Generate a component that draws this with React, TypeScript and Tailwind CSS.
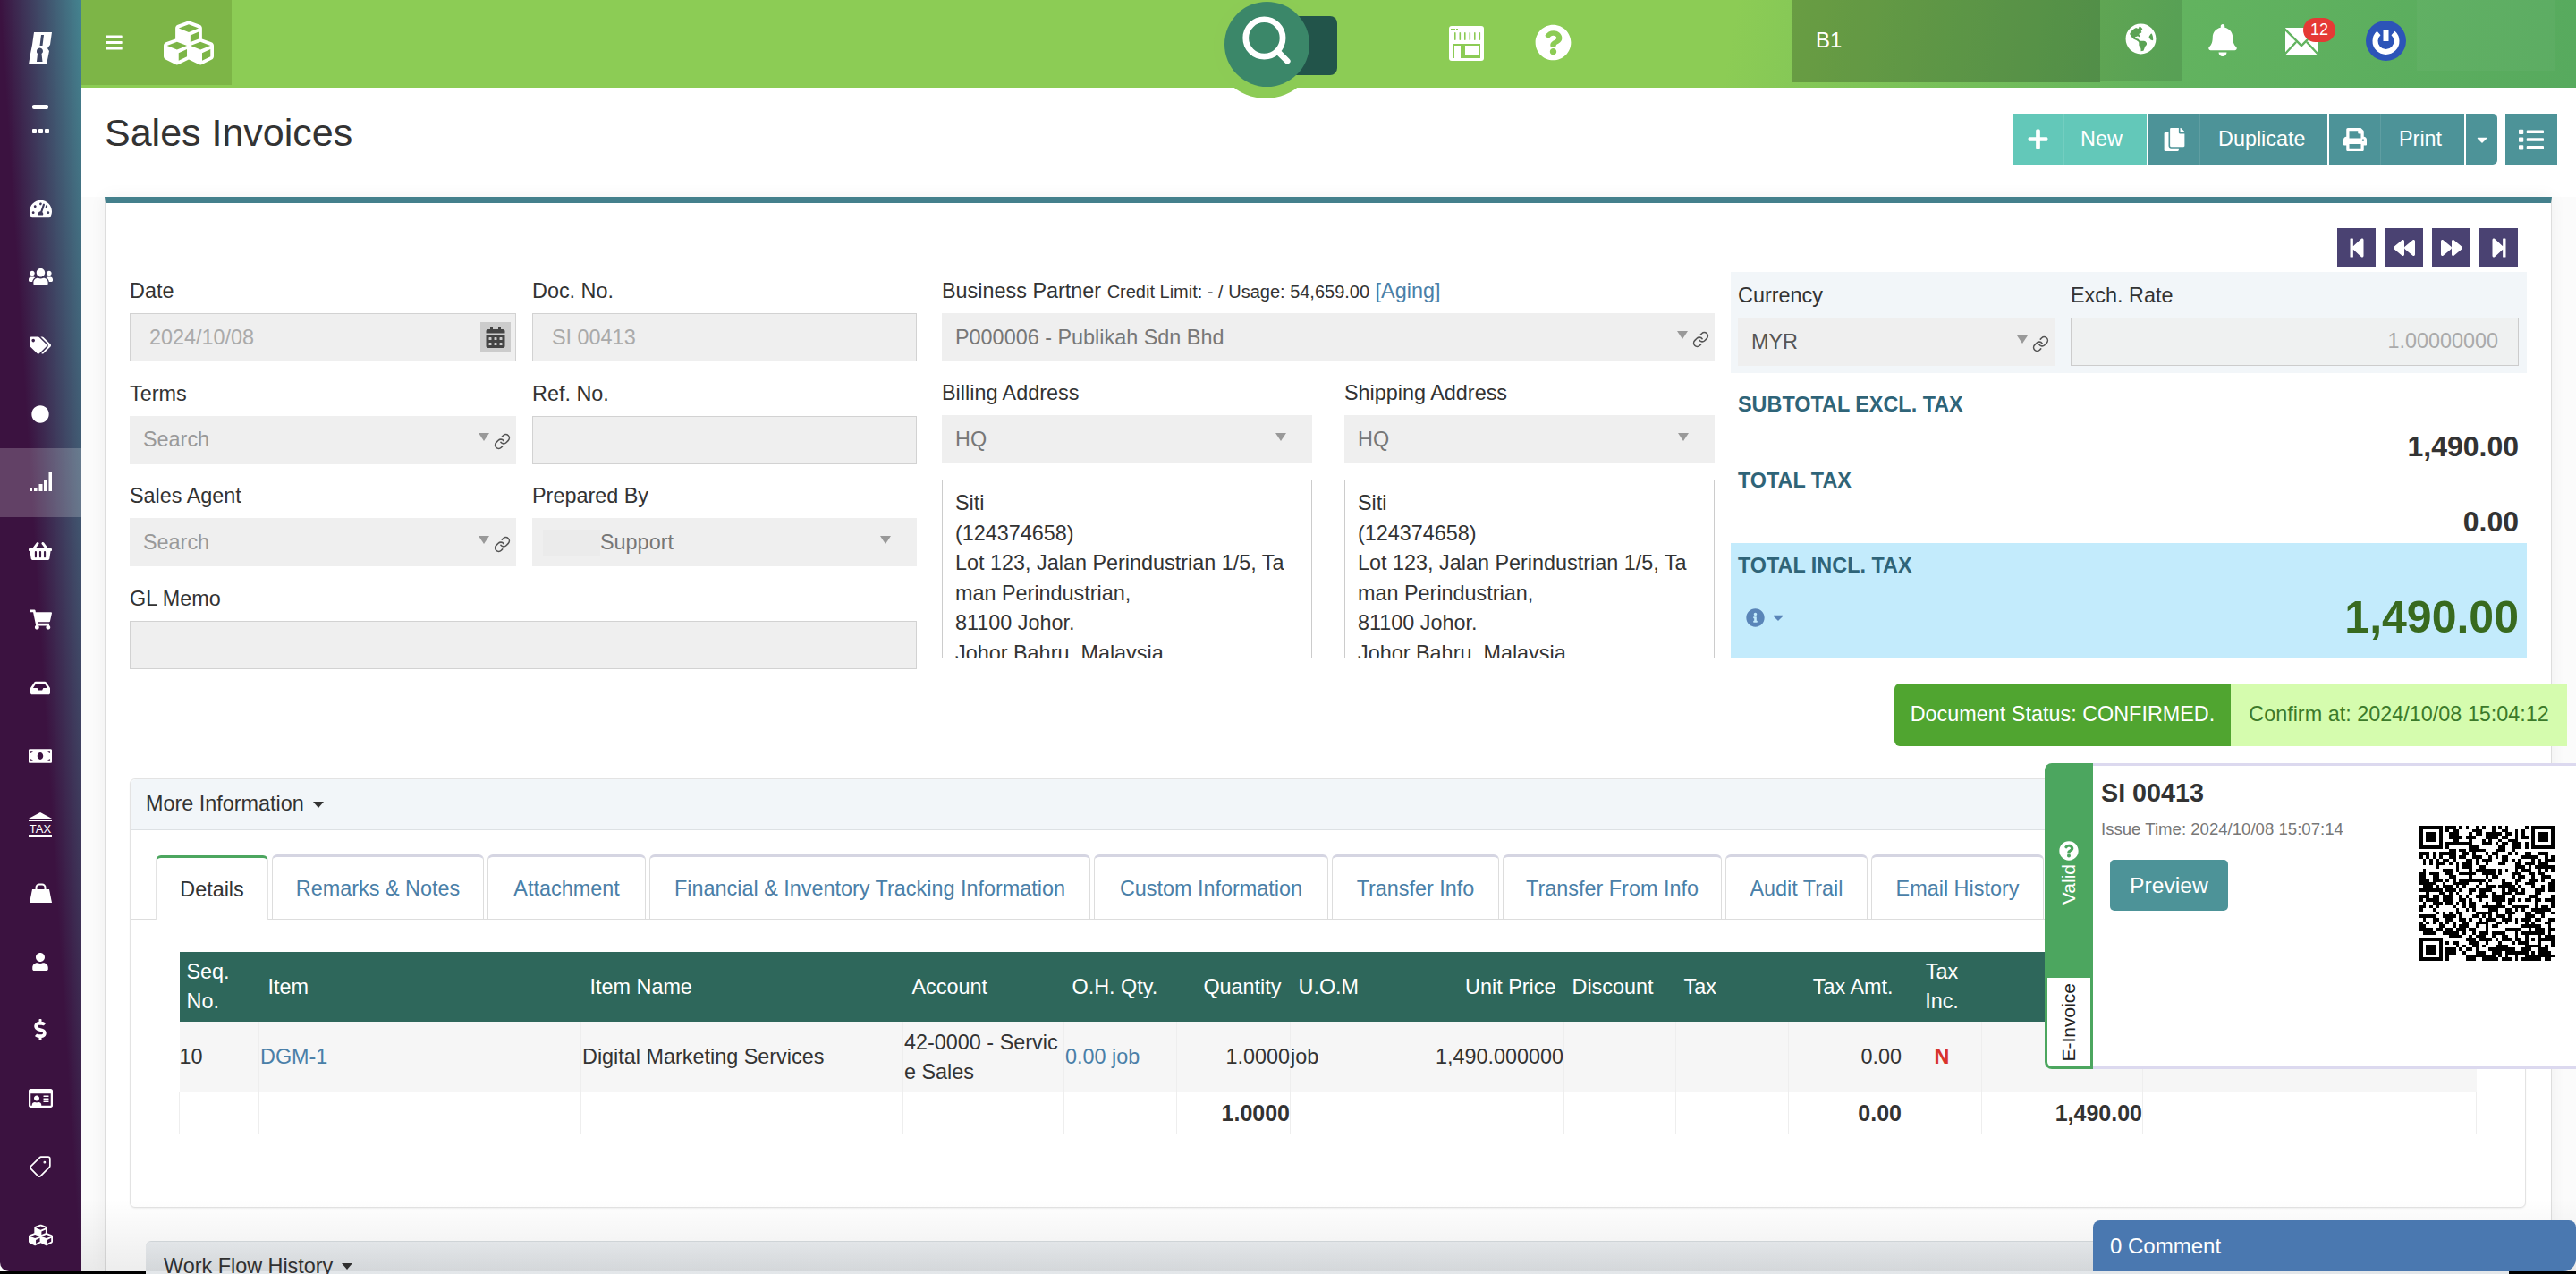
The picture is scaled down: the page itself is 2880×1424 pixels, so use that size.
import type { ReactNode } from "react";
import { Search, Link as LinkIcon, Tag } from "lucide-react";
import {
  FaBars, FaBell, FaCalendarAlt, FaCaretDown, FaCopy, FaCubes, FaDollarSign, FaGlobeAmericas, FaInbox,
  FaInfoCircle, FaList, FaMoneyBill, FaPlus, FaPrint, FaQuestionCircle, FaRegIdCard, FaShoppingBasket,
  FaShoppingCart, FaStepBackward, FaStepForward, FaBackward, FaForward, FaTachometerAlt, FaTags, FaUser,
  FaUsers, FaCircle,
} from "react-icons/fa";

function SignalIcon() {
  return (
    <svg width="25" height="22" viewBox="0 0 25 22" fill="#fff">
      <rect x="0" y="18" width="3" height="3" />
      <rect x="5" y="17" width="3.5" height="4" />
      <rect x="10.5" y="13" width="4" height="8" />
      <rect x="16" y="8" width="4" height="13" />
      <rect x="21.5" y="0" width="3.5" height="21" />
    </svg>
  );
}

function TaxIcon() {
  return (
    <svg width="26" height="28" viewBox="0 0 26 28" fill="#fff">
      <path d="M13 0 26 7H0Z" />
      <rect x="0" y="8" width="26" height="2" />
      <text x="13" y="23" textAnchor="middle" fontSize="13" fontFamily="Liberation Sans, sans-serif">TAX</text>
      <rect x="0" y="25" width="26" height="2" />
    </svg>
  );
}

function BagIcon() {
  return (
    <svg width="25" height="22" viewBox="0 0 25 22" fill="#fff">
      <path d="M7.5 8V5a3.5 3.5 0 0 1 3.5-3.5h3A3.5 3.5 0 0 1 17.5 5v3" fill="none" stroke="#fff" strokeWidth="2" />
      <path d="M3 7h19l3 15H0Z" />
    </svg>
  );
}

function BrandLogo() {
  return (
    <svg width="26" height="36" viewBox="0 0 26 36" fill="#fff">
      <path
        fillRule="evenodd"
        d="M6 0H26L24 14 21 18 23 21 20 36H0L2 24 4 14ZM14 3H17L15.5 15H12.5ZM9 21a3.5 3.5 0 1 1 5.5 3L15.5 33H9L10 24a3.5 3.5 0 0 1-1-3Z"
      />
    </svg>
  );
}

function StoreIcon() {
  return (
    <svg width="39" height="39" viewBox="0 0 39 39">
      <rect width="39" height="39" rx="3" fill="#fff" />
      <g fill="#8ccb55">
        <rect x="2" y="3" width="2" height="1.5" />
        <rect x="5" y="3" width="2" height="1.5" />
        <rect x="8" y="3" width="2" height="1.5" />
        <rect x="6" y="7" width="1.6" height="9" rx="0.8" />
        <rect x="11.5" y="7" width="1.6" height="9" rx="0.8" />
        <rect x="17" y="7" width="1.6" height="9" rx="0.8" />
        <rect x="22.5" y="7" width="1.6" height="9" rx="0.8" />
        <rect x="28" y="7" width="1.6" height="9" rx="0.8" />
        <rect x="33.5" y="7" width="1.6" height="9" rx="0.8" />
        <rect x="4" y="20" width="31" height="16" />
      </g>
      <rect x="6" y="22" width="7" height="14" fill="#fff" />
      <rect x="18" y="22" width="15" height="11" fill="#fff" />
    </svg>
  );
}

function MailIcon() {
  return (
    <svg width="36" height="30" viewBox="0 0 36 30">
      <rect width="36" height="30" fill="#fff" />
      <path d="M-1 1 18 20 37 1M-1 30 12 16M37 30 24 16" fill="none" stroke="#62b35f" strokeWidth="2.4" />
    </svg>
  );
}

function PowerIcon() {
  return (
    <svg width="45" height="45" viewBox="0 0 45 45">
      <circle cx="22.5" cy="22.5" r="22.5" fill="#2c54b8" />
      <path d="M14.5 14a12 12 0 1 0 16 0" fill="none" stroke="#fff" strokeWidth="6" />
      <path d="M22.5 10v13" stroke="#fff" strokeWidth="6" />
    </svg>
  );
}

// not a real code, only the look of one
function QrCode() {
  const size = 41;
  let seed = 413;
  let d = "";
  const inFinder = (x: number, y: number) =>
    (x < 8 && y < 8) || (x > size - 9 && y < 8) || (x < 8 && y > size - 9);
  const ring = (ox: number, oy: number, n: number, x: number, y: number) => {
    const dx = x - ox;
    const dy = y - oy;
    if (dx < 0 || dy < 0 || dx >= n || dy >= n) return false;
    return dx === 0 || dy === 0 || dx === n - 1 || dy === n - 1 || (dx > 1 && dy > 1 && dx < n - 2 && dy < n - 2);
  };
  for (let y = 0; y < size; y++) {
    for (let x = 0; x < size; x++) {
      seed = (seed * 1103515245 + 12345) & 0x7fffffff;
      let on = (seed >> 16) % 100 < 52;
      if (inFinder(x, y)) {
        on = ring(0, 0, 7, x, y) || ring(size - 7, 0, 7, x, y) || ring(0, size - 7, 7, x, y);
      } else if (x >= 32 && x <= 36 && y >= 32 && y <= 36) {
        on = x === 32 || x === 36 || y === 32 || y === 36 || (x === 34 && y === 34);
      }
      if (on) d += `M${x} ${y}h1v1h-1z`;
    }
  }
  return (
    <svg width="151" height="151" viewBox="0 0 41 41" shapeRendering="crispEdges">
      <path d={d} fill="#000" />
    </svg>
  );
}

const sideItems: { icon: ReactNode; active?: boolean }[] = [
  { icon: <FaTachometerAlt size={25} /> },
  { icon: <FaUsers size={27} /> },
  { icon: <FaTags size={24} /> },
  { icon: <FaCircle size={20} /> },
  { icon: <SignalIcon />, active: true },
  { icon: <FaShoppingBasket size={26} /> },
  { icon: <FaShoppingCart size={25} /> },
  { icon: <FaInbox size={22} /> },
  { icon: <FaMoneyBill size={26} /> },
  { icon: <TaxIcon /> },
  { icon: <BagIcon /> },
  { icon: <FaUser size={20} /> },
  { icon: <FaDollarSign size={24} /> },
  { icon: <FaRegIdCard size={27} /> },
  { icon: <Tag size={26} strokeWidth={1.6} className="rotate-90" /> },
  { icon: <FaCubes size={27} /> },
];

function Sidebar() {
  return (
    <aside className="w-[90px] shrink-0 h-full rounded-bl-[10px] text-white flex flex-col items-stretch bg-[linear-gradient(to_bottom_left,#44838f_0%,#3b1240_50%)]">
      <div className="pt-[36px] flex justify-center">
        <BrandLogo />
      </div>
      <div className="mt-[45px] mx-auto w-[18px] h-[5px] rounded-[2px] bg-white" />
      <div className="mt-[22px] flex justify-center gap-[2px]">
        <span className="w-[5px] h-[5px] rounded-[1px] bg-white" />
        <span className="w-[5px] h-[5px] rounded-[1px] bg-white" />
        <span className="w-[5px] h-[5px] rounded-[1px] bg-white" />
      </div>
      <div className="mt-[46px]">
        {sideItems.map((item, idx) => (
          <div
            key={idx}
            className={`h-[76.5px] flex items-center justify-center ${item.active ? "bg-white/20" : ""}`}
          >
            {item.icon}
          </div>
        ))}
      </div>
    </aside>
  );
}

function TopBar() {
  return (
    <header className="relative z-10 h-[98px] shrink-0 flex items-start text-white bg-[linear-gradient(100deg,#8ccc55_0%,#8ccc55_66%,#62b35f_84%,#57aa5e_100%)]">
      <div className="w-[169px] h-[95px] bg-[#7db547] flex items-center pl-[27px] gap-[45px]">
        <FaBars size={21} />
        <FaCubes size={56} />
      </div>
      <div className="relative ml-[1110px] w-[126px] h-[98px]">
        <div className="absolute left-[-12px] top-[-6px] w-[116px] h-[116px] rounded-full bg-[#8ccb55]" />
        <div className="absolute left-[60px] top-[18px] w-[66px] h-[66px] rounded-[8px] bg-[#22544a]" />
        <div className="absolute left-0 top-[2px] w-[95px] h-[95px] rounded-full bg-[#3b8769] flex items-center justify-center">
          <Search size={62} strokeWidth={2.6} className="mb-[10px] mr-[2px]" />
        </div>
      </div>
      <div className="ml-[125px] mt-[29px]">
        <StoreIcon />
      </div>
      <div className="ml-[57px] mt-[27px]">
        <FaQuestionCircle size={41} />
      </div>
      <div className="ml-[246px] w-[345px] h-[92px] bg-[rgba(0,0,0,0.22)] flex items-center pl-[27px] text-[24px] pb-[2px]">B1</div>
      <div className="w-[91px] h-[90px] bg-[rgba(0,0,0,0.1)] flex items-center justify-center pb-[4px]">
        <FaGlobeAmericas size={35} />
      </div>
      <div className="ml-[28px] mt-[27px]">
        <FaBell size={36} />
      </div>
      <div className="relative ml-[52px] mt-[31px]">
        <MailIcon />
        <span className="absolute left-[20px] top-[-11px] w-[36px] h-[27px] rounded-[14px] bg-[#e53935] text-[18px] leading-[27px] text-center">12</span>
      </div>
      <div className="ml-[54px] mt-[23px]">
        <PowerIcon />
      </div>
      <div className="ml-[12px] w-[154px] h-[79px] bg-white/[0.03]" />
    </header>
  );
}

function ActionButton({ icon, label, color, labelPad }: { icon: ReactNode; label: string; color: string; labelPad: string }) {
  return (
    <button className={`${color} h-[57px] flex items-center text-white text-[23.4px]`}>
      <span className="w-[58px] h-full flex items-center justify-center border-r border-white/10">{icon}</span>
      <span className={labelPad}>{label}</span>
    </button>
  );
}

function Field({ label, children, className }: { label: ReactNode; children: ReactNode; className?: string }) {
  return (
    <div className={className}>
      <div className="h-[30px] leading-[30px] mb-[10px] whitespace-nowrap">{label}</div>
      {children}
    </div>
  );
}

function TextBox({ value, right, muted = true }: { value?: string; right?: ReactNode; muted?: boolean }) {
  return (
    <div className={`h-[54px] bg-[#efefef] border border-[#d2d2d2] flex items-center justify-between pl-[21px] ${muted ? "text-[#aaa]" : "text-[#777]"}`}>
      <span className="pt-px">{value}</span>
      {right}
    </div>
  );
}

function SelectBox({ value, link = true, muted = false, dim = false }: { value: ReactNode; link?: boolean; muted?: boolean; dim?: boolean }) {
  return (
    <div className={`h-[54px] bg-[#efefef] flex items-center pl-[15px] ${muted ? "text-[#999]" : dim ? "text-[#555]" : "text-[#777]"}`}>
      <span className="flex-1 pt-px whitespace-nowrap flex items-center">{value}</span>
      <span className={`w-0 h-0 border-x-[6px] border-x-transparent border-t-[9px] border-t-[#999] mb-[6px] ${link ? "mr-[5px]" : "mr-[29px]"}`} />
      {link && <LinkIcon size={19} strokeWidth={2} className="text-[#555] mr-[6px] mt-[4px]" />}
    </div>
  );
}

function AddressBox() {
  const lines = ["Siti", "(124374658)", "Lot 123, Jalan Perindustrian 1/5, Ta", "man Perindustrian,", "81100 Johor.", "Johor Bahru, Malaysia"];
  return (
    <div className="mt-[18px] h-[200px] border border-[#ccc] overflow-hidden pt-[9px] pl-[14px] leading-[33.5px] text-[#333]">
      {lines.map((line) => (
        <div key={line} className="whitespace-nowrap">{line}</div>
      ))}
    </div>
  );
}

function NavButton({ children }: { children: ReactNode }) {
  return <button className="w-[43px] h-[43px] bg-[#4a4272] text-white flex items-center justify-center">{children}</button>;
}

function FormSection() {
  return (
    <div className="flex pl-[27px]">
      <div className="w-[880px] pt-[83px] grid grid-cols-[432px_430px] gap-x-[18px] gap-y-[20.5px] content-start">
        <Field label="Date">
          <TextBox
            value="2024/10/08"
            right={
              <span className="w-[34px] h-[34px] bg-[#ccc] mr-[5px] flex items-center justify-center text-[#444]">
                <FaCalendarAlt size={24} />
              </span>
            }
          />
        </Field>
        <Field label="Doc. No."><TextBox value="SI 00413" /></Field>
        <Field label="Terms"><SelectBox value="Search" muted /></Field>
        <Field label="Ref. No."><TextBox /></Field>
        <Field label="Sales Agent"><SelectBox value="Search" muted /></Field>
        <Field label="Prepared By">
          <SelectBox
            link={false}
            value={
              <>
                <span className="w-[64px] h-[29px] ml-[-3px] bg-[#ebebeb]" />
                Support
              </>
            }
          />
        </Field>
        <Field label="GL Memo" className="col-span-2"><TextBox /></Field>
      </div>

      <div className="w-[864px] ml-[28px] pt-[83px]">
        <Field
          label={
            <>
              Business Partner <span className="text-[20px]">Credit Limit: - / Usage: 54,659.00</span>{" "}
              <a className="text-[#4a7fa8]">[Aging]</a>
            </>
          }
        >
          <SelectBox value="P000006 - Publikah Sdn Bhd" />
        </Field>
        <div className="grid grid-cols-2 gap-x-[36px] mt-[20px]">
          <Field label="Billing Address">
            <SelectBox value="HQ" link={false} />
            <AddressBox />
          </Field>
          <Field label="Shipping Address">
            <SelectBox value="HQ" link={false} />
            <AddressBox />
          </Field>
        </div>
      </div>

      <div className="w-[890px] ml-[18px] pt-[28px]">
        <div className="flex justify-end gap-[10px] pr-[10px]">
          <NavButton><FaStepBackward size={24} /></NavButton>
          <NavButton><FaBackward size={24} /></NavButton>
          <NavButton><FaForward size={24} /></NavButton>
          <NavButton><FaStepForward size={24} /></NavButton>
        </div>
        <div className="mt-[6px] h-[113px] bg-[#f2f6f9] pl-[8px] pr-[9px] pt-[11px] flex gap-[18px]">
          <Field label="Currency" className="w-[354px]"><SelectBox value="MYR" dim /></Field>
          <Field label="Exch. Rate" className="flex-1">
            <div className="h-[54px] bg-[#eff1f1] border border-[#ccc] flex items-center justify-end pr-[22px] text-[#aaa]">1.00000000</div>
          </Field>
        </div>
        <div className="px-[8px] pr-[9px]">
          <div className="mt-[20px] h-[30px] leading-[30px] font-bold text-[#2f6478]">SUBTOTAL EXCL. TAX</div>
          <div className="mt-[17px] h-[30px] leading-[30px] font-bold text-[32px] text-right">1,490.00</div>
          <div className="mt-[8px] h-[30px] leading-[30px] font-bold text-[#2f6478]">TOTAL TAX</div>
          <div className="mt-[16px] h-[30px] leading-[30px] font-bold text-[32px] text-right">0.00</div>
        </div>
        <div className="mt-[9px] h-[128px] bg-[#c3ebfc] px-[8px] pr-[9px] pt-[10px]">
          <div className="h-[30px] leading-[30px] font-bold text-[#2f6478]">TOTAL INCL. TAX</div>
          <div className="mt-[13px] h-[60px] flex items-center justify-between">
            <span className="flex items-center gap-[6px] pl-[9px] text-[#5a85b8]">
              <FaInfoCircle size={21} />
              <FaCaretDown size={18} />
            </span>
            <span className="font-bold text-[50px] text-[#386a1f]">1,490.00</span>
          </div>
        </div>
        <div className="mt-[29px] -mr-[45px] flex justify-end">
          <div className="w-[376px] h-[70px] bg-[#50a530] text-white rounded-l-[6px] flex items-center justify-center whitespace-nowrap">Document Status: CONFIRMED.</div>
          <div className="w-[376px] h-[70px] bg-[#d5fcae] text-[#3c7a2a] flex items-center justify-center whitespace-nowrap">Confirm at: 2024/10/08 15:04:12</div>
        </div>
      </div>
    </div>
  );
}

const tabs = [
  { label: "Details", width: "w-[126px]", active: true },
  { label: "Remarks & Notes", width: "w-[237px]" },
  { label: "Attachment", width: "w-[177px]" },
  { label: "Financial & Inventory Tracking Information", width: "w-[493px]" },
  { label: "Custom Information", width: "w-[262px]" },
  { label: "Transfer Info", width: "w-[187px]" },
  { label: "Transfer From Info", width: "w-[245px]" },
  { label: "Audit Trail", width: "w-[159px]" },
  { label: "Email History", width: "w-[193px]" },
];

const colWidths = ["w-[89px]", "w-[360px]", "w-[360px]", "w-[180px]", "w-[126px]", "w-[127px]", "w-[125px]", "w-[181px]", "w-[125px]", "w-[126px]", "w-[127px]", "w-[89px]", "w-[180px]", "w-[373px]"];

function DetailsTable() {
  const line = "border-r border-[#eeeeee]";
  return (
    <table className="ml-[54px] w-[2568px] table-fixed text-left leading-[33px]">
      <colgroup>
        {colWidths.map((w, idx) => (
          <col key={idx} className={w} />
        ))}
      </colgroup>
      <thead>
        <tr className="h-[78px] bg-[#2e675b] text-white">
          <th className="font-normal pl-[8px]">Seq.<br />No.</th>
          <th className="font-normal pl-[10px]">Item</th>
          <th className="font-normal pl-[10px]">Item Name</th>
          <th className="font-normal pl-[10px]">Account</th>
          <th className="font-normal pl-[9px] whitespace-nowrap">O.H. Qty.</th>
          <th className="font-normal text-right pr-[10px]">Quantity</th>
          <th className="font-normal pl-[9px]">U.O.M</th>
          <th className="font-normal text-right pr-[9px]">Unit Price</th>
          <th className="font-normal pl-[9px]">Discount</th>
          <th className="font-normal pl-[9px]">Tax</th>
          <th className="font-normal text-right pr-[10px]">Tax Amt.</th>
          <th className="font-normal text-center">Tax<br />Inc.</th>
          <th />
          <th />
        </tr>
      </thead>
      <tbody>
        <tr className="h-[79px] bg-[#f6f6f6]">
          <td className={line}>10</td>
          <td className={`${line} pl-px text-[#4a7fa8]`}>DGM-1</td>
          <td className={`${line} pl-px`}>Digital Marketing Services</td>
          <td className={`${line} pl-px break-all`}>42-0000 - Servic<br />e Sales</td>
          <td className={`${line} pl-px text-[#4a7fa8]`}>0.00 job</td>
          <td className={`${line} text-right`}>1.0000</td>
          <td className={line}>job</td>
          <td className={`${line} text-right`}>1,490.000000</td>
          <td className={line} />
          <td className={line} />
          <td className={`${line} text-right`}>0.00</td>
          <td className={`${line} text-center font-bold text-[#d9332b]`}>N</td>
          <td className={line} />
          <td />
        </tr>
        <tr className="h-[47px] font-bold text-[25px]">
          <td className={`${line} border-l`} />
          <td className={line} />
          <td className={line} />
          <td className={line} />
          <td className={line} />
          <td className={`${line} text-right`}>1.0000</td>
          <td className={line} />
          <td className={line} />
          <td className={line} />
          <td className={line} />
          <td className={`${line} text-right`}>0.00</td>
          <td className={line} />
          <td className={`${line} text-right`}>1,490.00</td>
          <td className={line} />
        </tr>
      </tbody>
    </table>
  );
}

function InfoPanel() {
  return (
    <section className="mt-[36px] ml-[27px] mr-[28px] h-[480px] border border-[#e3e3e3] rounded-[6px] shadow-[0_1px_2px_rgba(0,0,0,0.06)] bg-white">
      <div className="h-[57px] bg-[#f2f6f9] border-b border-[#dde1e4] rounded-t-[6px] flex items-center pl-[17px] gap-[10px]">
        More Information
        <span className="w-0 h-0 border-x-[6px] border-x-transparent border-t-[7px] border-t-[#333]" />
      </div>
      <div className="mt-[28px] pl-[28px] h-[72px] border-b border-[#ddd] flex items-end gap-[4px]">
        {tabs.map((tab) => (
          <div
            key={tab.label}
            className={`${tab.width} shrink-0 h-[72px] pt-[2px] flex items-center justify-center whitespace-nowrap rounded-t-[6px] border-x border-t-[3px] ${
              tab.active
                ? "-mb-px border-t-[#4ca65f] border-x-[#e3e3e3] bg-white text-[#333]"
                : "border-t-[#d5d5e2] border-x-[#ddd] text-[#4a7fa8]"
            }`}
          >
            {tab.label}
          </div>
        ))}
      </div>
      <div className="mt-[36px]">
        <DetailsTable />
      </div>
    </section>
  );
}

function EInvoicePopup() {
  return (
    <div className="absolute left-[2286px] top-[853px] w-[594px] h-[342px] z-20 flex">
      <div className="w-[54px] h-full rounded-l-[8px] bg-[#4ca65f] px-[3px] pb-[3px] flex flex-col">
        <div className="flex-1 flex flex-col items-center justify-end pb-[82px] text-white">
          <FaQuestionCircle size={22} />
          <span className="mt-[4px] text-[21px] leading-[24px] [writing-mode:vertical-rl] rotate-180">Valid</span>
        </div>
        <div className="h-[99px] bg-white rounded-bl-[5px] flex items-center justify-center">
          <span className="text-[21px] leading-[24px] text-[#222] [writing-mode:vertical-rl] rotate-180">E-Invoice</span>
        </div>
      </div>
      <div className="flex-1 bg-white border-y-[3px] border-[#dcd9ef] flex justify-between">
        <div className="pl-[9px] pt-[13px]">
          <div className="text-[28.7px] leading-[34px] font-bold">SI 00413</div>
          <div className="mt-[12px] text-[18.6px] leading-[24px] text-[#777]">Issue Time: 2024/10/08 15:07:14</div>
          <button className="mt-[22px] ml-[10px] w-[132px] h-[57px] rounded-[5px] bg-[#4d9398] text-white text-[24.7px]">Preview</button>
        </div>
        <div className="pt-[67px] pr-[24px]">
          <QrCode />
        </div>
      </div>
    </div>
  );
}

export default function App() {
  return (
    <div className="relative w-[2880px] h-[1424px] overflow-hidden bg-black text-[23.4px] text-[#333] font-['Liberation_Sans',Arial,sans-serif]">
      <div className="h-[1421px] flex bg-white">
        <Sidebar />
        <main className="flex-1 min-w-0 h-full flex flex-col bg-[#fbfbfb]">
          <TopBar />
          <div className="h-[122px] shrink-0 bg-white flex justify-between pl-[27px] pr-[21px]">
            <h1 className="pt-[28px] text-[43px] leading-[44px] text-[#333]">Sales Invoices</h1>
            <div className="pt-[29px] flex items-start">
              <ActionButton icon={<FaPlus size={25} />} label="New" color="w-[150px] bg-[#63c8b9]" labelPad="pl-[18px]" />
              <ActionButton icon={<FaCopy size={26} />} label="Duplicate" color="ml-[2px] w-[200px] bg-[#4d9398]" labelPad="pl-[20px]" />
              <ActionButton icon={<FaPrint size={26} />} label="Print" color="ml-[2px] w-[151px] bg-[#4d9398]" labelPad="pl-[20px]" />
              <button className="ml-[2px] w-[35px] h-[57px] rounded-r-[5px] bg-[#4d9398] flex items-center justify-center text-white">
                <FaCaretDown size={18} />
              </button>
              <button className="ml-[9px] w-[58px] h-[57px] bg-[#4d9398] flex items-center justify-center text-white">
                <FaList size={28} />
              </button>
            </div>
          </div>
          <div className="flex-1 min-h-0 ml-[27px] mr-[27px] bg-white border-t-[7px] border-t-[#44808c] border-x border-x-[#ddd] shadow-[0_0_18px_rgba(0,0,0,0.05)] overflow-visible">
            <FormSection />
            <InfoPanel />
            <div className="mt-[37px] ml-[45px] mr-[47px] h-[60px] rounded-t-[6px] border-t border-[#d8dde0] bg-[linear-gradient(to_bottom,#eceff2,#dde1e4)] pl-[20px] pt-[12px] leading-[30px] flex items-start gap-[10px]">
              Work Flow History
              <span className="mt-[12px] w-0 h-0 border-x-[6px] border-x-transparent border-t-[7px] border-t-[#333]" />
            </div>
          </div>
        </main>
      </div>
      <div className="absolute left-[90px] right-0 top-[1340px] h-[81px] pointer-events-none bg-[linear-gradient(to_bottom,rgba(0,0,0,0),rgba(0,0,0,0.07))]" />
      <EInvoicePopup />
      <div className="absolute left-[2340px] top-[1364px] w-[540px] h-[57px] z-20 rounded-t-[8px] rounded-br-[14px] bg-[#4a78b0] text-white flex items-center pl-[19px] text-[24px]">0 Comment</div>
    </div>
  );
}
